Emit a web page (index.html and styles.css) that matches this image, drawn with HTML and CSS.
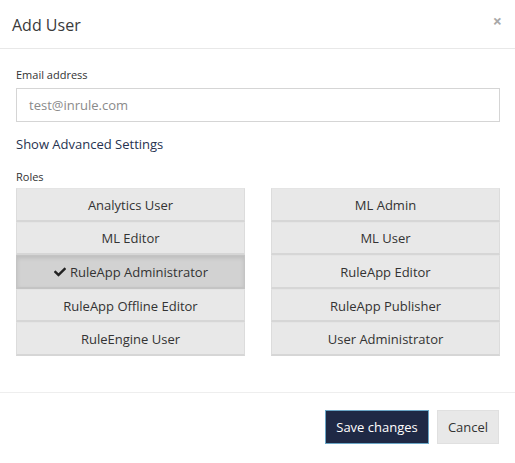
FILE: index.html
```html
<!DOCTYPE html>
<html>
<head>
<meta charset="utf-8">
<link rel="stylesheet" href="styles.css">
</head>
<body>
<div class="modal">
  <div class="modal-header">
    <h4 class="title">Add User</h4>
    <span class="close">&times;</span>
  </div>
  <div class="modal-body">
    <label class="label">Email address</label>
    <div class="input">test@inrule.com</div>
    <a class="advanced">Show Advanced Settings</a>
    <div class="label roles-label">Roles</div>
    <div class="roles">
      <div class="col">
        <div class="role">Analytics User</div>
        <div class="role">ML Editor</div>
        <div class="role active"><svg class="check" viewBox="0 0 512 512" width="14" height="12"><path d="M173.9 439.4 7.5 273c-10-10-10-26.2 0-36.2l36.2-36.2c10-10 26.2-10 36.2 0L192 312.7 432.1 72.6c10-10 26.2-10 36.2 0l36.2 36.2c10 10 10 26.2 0 36.2L210.1 439.4c-10 10-26.2 10-36.2 0z" fill="#222"/></svg>RuleApp Administrator</div>
        <div class="role">RuleApp Offline Editor</div>
        <div class="role">RuleEngine User</div>
      </div>
      <div class="col">
        <div class="role">ML Admin</div>
        <div class="role">ML User</div>
        <div class="role">RuleApp Editor</div>
        <div class="role">RuleApp Publisher</div>
        <div class="role">User Administrator</div>
      </div>
    </div>
  </div>
  <div class="modal-footer">
    <button class="btn btn-primary">Save changes</button>
    <button class="btn btn-default">Cancel</button>
  </div>
</div>
</body>
</html>
```
FILE: styles.css
```css
html, body {
  margin: 0;
  padding: 0;
  background: #fff;
}
body {
  font-family: "Open Sans", "Liberation Sans", sans-serif;
  color: #333;
}
.modal {
  width: 515px;
  height: 463px;
  display: flex;
  flex-direction: column;
}
.modal-header {
  height: 49px;
  box-sizing: border-box;
  border-bottom: 1px solid #e8e8e8;
  display: flex;
  align-items: center;
  justify-content: space-between;
  padding: 0 12px 0 12px;
}
.title {
  margin: 0;
  font-size: 16px;
  font-weight: 400;
  color: #3a3a3a;
  line-height: 22px;
  padding-top: 2px;
}
.close {
  font-size: 16px;
  font-weight: 700;
  color: #a8a8a8;
  line-height: 16px;
  margin-top: -6px;
  margin-right: 1px;
}
.modal-body {
  padding: 18px 15px 36px 16px;
  display: flex;
  flex-direction: column;
}
.label {
  font-size: 11px;
  line-height: 15px;
  color: #333;
  margin-bottom: 6px;
}
.input {
  height: 34px;
  box-sizing: border-box;
  border: 1px solid #d5d5d5;
  padding: 0 12px;
  display: flex;
  align-items: center;
  font-size: 13px;
  color: #8a8a8a;
}
.advanced {
  margin-top: 13px;
  font-size: 13px;
  line-height: 18px;
  color: #263250;
}
.roles-label {
  margin-top: 16px;
  margin-bottom: 4px;
}
.roles {
  display: grid;
  grid-template-columns: 229px 229px;
  column-gap: 26px;
}
.col {
  display: flex;
  flex-direction: column;
}
.role {
  height: 33.6px;
  box-sizing: border-box;
  background: #e8e8e8;
  border: 1px solid #dcdcdc;
  border-top-color: #e4e4e4;
  border-bottom: 2px solid #d6d6d6;
  display: flex;
  align-items: center;
  justify-content: center;
  font-size: 13px;
  color: #333;
  padding-top: 1px;
}
.role.active {
  background: #d2d2d2;
  border-color: #c4c4c4;
  box-shadow: inset 0 2px 4px rgba(0,0,0,0.1);
}
.check {
  margin-right: 3px;
}
.modal-footer {
  border-top: 1px solid #eeeeee;
  padding: 17px 16px 0 0;
  display: flex;
  justify-content: flex-end;
  gap: 8px;
}
.btn {
  height: 34px;
  box-sizing: border-box;
  font-family: "Open Sans", "Liberation Sans", sans-serif;
  font-size: 13px;
  border-radius: 0;
  cursor: pointer;
}
.btn-primary {
  width: 104px;
  padding: 0;
  background: #1f2945;
  color: #fff;
  border: 1px solid #6aa6c6;
}
.btn-default {
  width: 62px;
  padding: 0;
  background: #e8e8e8;
  color: #333;
  border: 1px solid #e0e0e0;
}
```
